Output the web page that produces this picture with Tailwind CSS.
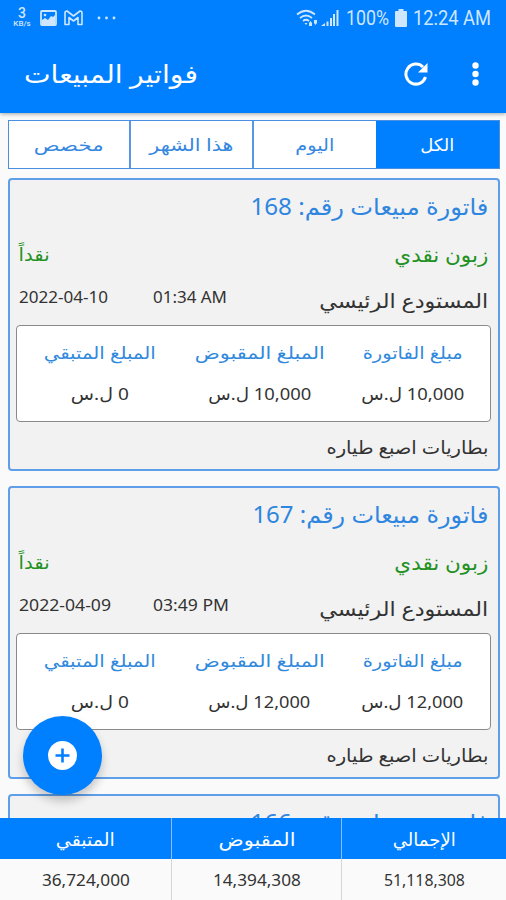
<!DOCTYPE html>
<html lang="ar">
<head>
  <meta charset="UTF-8" />
  <title>فواتير المبيعات</title>
  <meta name="viewport" content="width=device-width, initial-scale=1" />
  <script src="https://cdn.jsdelivr.net/npm/@tailwindcss/browser@4"></script>
</head>
<body class="h-[900px] w-[506px] overflow-hidden bg-[#fafafa] font-['Noto_Sans','DejaVu_Sans',sans-serif] text-[#333]">
  <div class="relative flex h-full flex-col">
    <!-- status bar + toolbar -->
    <header class="z-10 h-[113px] shrink-0 bg-[#007fff] text-white shadow-[0_1px_4px_rgba(0,0,0,0.35)]">
      <div class="flex h-9 items-center justify-between pr-[15px] pl-3 font-[Roboto] text-[#cfe6ff]">
        <div class="flex items-center">
          <div class="flex w-5 flex-col items-center font-medium"><span class="text-[14px] leading-[11px]">3</span><span class="text-[8px] leading-[9px]">KB/s</span></div>
          <svg class="ml-2 h-4 w-[17px]" viewBox="0 0 17 16" fill="none"><rect x="1" y="1" width="15" height="14" rx="1" stroke="currentColor" stroke-width="1.8"/><path d="M2 10l3-2 3 2 3-4 2 1 2-2v9H2z" fill="currentColor"/><circle cx="5" cy="5" r="1.3" fill="currentColor"/></svg>
          <svg class="ml-[7px] h-4 w-[19px]" viewBox="0 0 19 16" fill="none" stroke="currentColor" stroke-width="1.6" stroke-linejoin="round"><path d="M1 14.500V3Q1 1 3 1L9.500 6 16 1Q18 1 18 3V14.500H14V7.500L9.500 11 5 7.500V14.500Z"/></svg>
          <svg class="ml-3.5 h-1 w-[19px]" viewBox="0 0 19 4" fill="currentColor"><circle cx="2" cy="2" r="1.400"/><circle cx="9.500" cy="2" r="1.400"/><circle cx="17" cy="2" r="1.400"/></svg>
        </div>
        <div class="flex items-center">
          <svg class="h-[18px] w-[23px]" viewBox="0 0 23 18" fill="none" stroke="currentColor" stroke-width="1.700"><path d="M1 5.500Q10 -2 19 5.500M4 9Q10 4 16 9M7 12Q10 9.500 13 12"/><path d="M8.500 14h3L10 16zM13 14l1.500-2 1.500 2v3h-3zM18 11h3v3l-1.500 2-1.500-2z" fill="currentColor" stroke="none"/></svg>
          <svg class="ml-0.5 h-4 w-[18px]" viewBox="0 0 18 16" fill="currentColor"><path d="M0 16l4-3v3zM5.500 11.500H7.500V16H5.500zM9 8H11V16H9zM12 4H14V16H12zM15.500 0H17.500V16H15.500z"/></svg>
          <span data-w="43" class="ml-[7px] text-[20px] leading-none">100%</span>
          <svg class="ml-[6px] h-[18px] w-3" viewBox="0 0 12 18" fill="currentColor"><path d="M3.500 0h5v2H11q1 0 1 1v14q0 1-1 1H1q-1 0-1-1V3q0-1 1-1h2.500z"/></svg>
          <span class="ml-[6px] flex"><span data-w="78" class="text-[20px] leading-none">12:24 AM</span></span>
        </div>
      </div>
      <div class="flex h-[75px] items-center justify-between pr-[27px] pl-6">
        <h1 class="text-[25px] leading-none" dir="rtl"><span data-w="174">فواتير المبيعات</span></h1>
        <div class="flex items-center gap-[44px]">
          <svg class="h-6 w-6" viewBox="0 0 24 24" fill="none" stroke="currentColor" stroke-width="3"><path d="M21.500 15A10 10 0 1 1 19 5"/><path d="M23.500 1V10.500H14z" fill="currentColor" stroke="none"/></svg>
          <svg class="h-6 w-[7px]" viewBox="0 0 7 24" fill="currentColor"><circle cx="3.500" cy="3.500" r="3.200"/><circle cx="3.500" cy="12" r="3.200"/><circle cx="3.500" cy="20.500" r="3.200"/></svg>
        </div>
      </div>
    </header>

    <main class="flex min-h-0 flex-1 flex-col overflow-hidden pt-[7px] pr-[6px] pl-2" dir="rtl">
      <nav class="grid h-[49px] shrink-0 grid-cols-[123px_123px_123px_1fr] border border-[#4a90e2] text-[17px] text-[#3587df]">
        <div class="flex items-center justify-center bg-[#007fff] text-white"><span data-w="34">الكل</span></div>
        <div class="flex items-center justify-center border-l border-[#5a96e8] bg-white"><span data-w="39">اليوم</span></div>
        <div class="flex items-center justify-center border-x border-[#5a96e8] bg-white"><span data-w="84">هذا الشهر</span></div>
        <div class="flex items-center justify-center border-r border-[#5a96e8] bg-white"><span data-w="70">مخصص</span></div>
      </nav>
      <div id="list" class="mt-[9px] flex flex-col gap-[15px]"></div>
    </main>

    <!-- totals -->
    <footer class="z-10 grid h-[82px] shrink-0 grid-cols-[164px_171px_171px] grid-rows-[41px_41px] bg-[#fafafa] text-center" dir="rtl">
      <div class="flex items-center justify-center bg-[#007fff] text-[18px] leading-none text-white"><span data-w="63">الإجمالي</span></div>
      <div class="flex items-center justify-center border-x border-[#8dbdf5] bg-[#007fff] text-[18px] leading-none text-white"><span data-w="77">المقبوض</span></div>
      <div class="flex items-center justify-center bg-[#007fff] text-[18px] leading-none text-white"><span data-w="59">المتبقي</span></div>
      <div class="flex items-center justify-center text-[17px] leading-none"><span data-w="81">51,118,308</span></div>
      <div class="flex items-center justify-center border-x border-[#d5d5d5] text-[17px] leading-none"><span data-w="88">14,394,308</span></div>
      <div class="flex items-center justify-center text-[17px] leading-none"><span data-w="88">36,724,000</span></div>
    </footer>

    <button class="absolute top-[716px] left-[23px] z-20 flex size-[79px] items-center justify-center rounded-full bg-[#007fff] shadow-[0_6px_10px_rgba(0,0,0,0.22)]" aria-label="إضافة">
      <svg class="size-[29px]" viewBox="0 0 29 29"><circle cx="14.500" cy="14.500" r="14.500" fill="#fff"/><path d="M14.500 7.500v14M7.500 14.500h14" stroke="#007fff" stroke-width="2.600"/></svg>
    </button>
  </div>

  <script>
    const invoices = [
      { no: 168, date: '2022-04-10', time: '01:34 AM', amount: '10,000', w: [238, 89, 74, 103] },
      { no: 167, date: '2022-04-09', time: '03:49 PM', amount: '12,000', w: [236, 92, 76, 102] },
      { no: 166 },
    ];

    const details = v => `
        <div class="flex h-[43px] items-center justify-between pr-[3px] pl-[2px] text-[#229122]">
          <span data-w="94" class="text-[20px]">زبون نقدي</span><span data-w="31" class="text-[18px]">نقداً</span>
        </div>
        <div class="flex h-[49px] items-center pr-[3px] pl-[2px] text-[17px]">
          <span data-w="169" class="text-[20px]">المستودع الرئيسي</span>
          <div class="mr-auto flex w-[210px] pb-[7px]" dir="ltr"><div class="w-[134px]"><span data-w="${v.w[1]}">${v.date}</span></div><span data-w="${v.w[2]}">${v.time}</span></div>
        </div>
        <div class="-ml-px grid h-[97px] grid-cols-[155px_151px_1fr] grid-rows-[53px_30px] rounded border border-[#8a8a8a] bg-white text-[17px]">
          <div class="flex items-center justify-center text-[#3089dc]"><span data-w="100">مبلغ الفاتورة</span></div>
          <div class="flex items-center justify-center text-[#3089dc]"><span data-w="130">المبلغ المقبوض</span></div>
          <div class="flex items-center justify-center pl-[3px] text-[#3089dc]"><div class="pr-[5px]"><span data-w="112">المبلغ المتبقي</span></div></div>
          <div class="flex items-center justify-center"><span data-w="${v.w[3]}">${v.amount} ل.س</span></div>
          <div class="flex items-center justify-center"><span data-w="${v.w[3]}">${v.amount} ل.س</span></div>
          <div class="flex items-center justify-center pr-[2px]"><span data-w="58">0 ل.س</span></div>
        </div>
        <div class="flex h-[47px] items-center px-[3px] pt-[3px] text-[18px]"><span data-w="162">بطاريات اصبع طياره</span></div>`;

    document.getElementById('list').innerHTML = invoices.map(v => `
      <article class="h-[293px] shrink-0 rounded border-2 border-[#5f9fe9] bg-[#f2f2f2] px-[7px]">
        <div class="flex h-[53px] items-center px-[3px] text-[23px] text-[#2f86e0]"><span data-w="${v.w ? v.w[0] : 238}">فاتورة مبيعات رقم: ${v.no}</span></div>
        ${v.w ? details(v) : ''}
      </article>`).join('');

    // fit each label to its width once the styles and fonts are in
    window.addEventListener('load', () => {
      document.querySelectorAll('[data-w]').forEach(el => {
        el.style.display = 'inline-block';
        el.style.whiteSpace = 'nowrap';
        el.style.flexShrink = 0;
        const own = el.getBoundingClientRect().width, want = +el.dataset.w;
        const ltr = getComputedStyle(el).direction === 'ltr';
        el.style.transformOrigin = ltr ? 'left' : 'right';
        el.style.transform = `scaleX(${want / own})`;
        el.style[ltr ? 'marginRight' : 'marginLeft'] = `${want - own}px`;
      });
    });
  </script>
</body>
</html>
